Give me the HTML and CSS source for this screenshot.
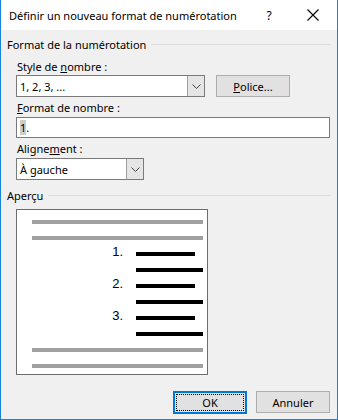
FILE: index.html
```html
<!DOCTYPE html>
<html lang="fr">
<head>
    <meta charset="UTF-8">
    <title>Définir un nouveau format de numérotation</title>
    <link rel="stylesheet" href="styles.css">
</head>
<body>
    <div class="window">
        <div class="titlebar">
            <span class="title">Définir un nouveau format de numérotation</span>
            <span class="help">?</span>
            <svg class="close" width="12" height="12" viewBox="0 0 12 12">
                <path d="M0.5 0.5 L11.5 11.5 M11.5 0.5 L0.5 11.5" stroke="#000" stroke-width="1.1" fill="none"/>
            </svg>
        </div>

        <div class="content">
            <div class="group-title"><span>Format de la numérotation</span></div>

            <div class="label">Style de <u>n</u>ombre :</div>
            <div class="row">
                <div class="combo combo-style">
                    <span class="combo-text">1, 2, 3, ...</span>
                    <span class="combo-btn">
                        <svg width="9" height="5" viewBox="0 0 9 5"><path d="M0.5 0.5 L4.5 4.5 L8.5 0.5" stroke="#444" stroke-width="1" fill="none"/></svg>
                    </span>
                </div>
                <div class="button police"><u>P</u>olice...</div>
            </div>

            <div class="label label-format"><u>F</u>ormat de nombre :</div>
            <div class="textbox"><span class="sel">1</span>.</div>

            <div class="label label-align">Aligne<u>m</u>ent :</div>
            <div class="combo combo-align">
                <span class="combo-text">À gauche</span>
                <span class="combo-btn">
                    <svg width="9" height="5" viewBox="0 0 9 5"><path d="M0.5 0.5 L4.5 4.5 L8.5 0.5" stroke="#444" stroke-width="1" fill="none"/></svg>
                </span>
            </div>

            <div class="group-title group-preview"><span>Aperçu</span></div>

            <div class="preview">
                <div class="line"><div class="bar grey"></div></div>
                <div class="line"><div class="bar grey"></div></div>
                <div class="line item"><span class="num">1.</span><div class="bar black short"></div></div>
                <div class="line item"><span class="num"></span><div class="bar black"></div></div>
                <div class="line item"><span class="num">2.</span><div class="bar black short"></div></div>
                <div class="line item"><span class="num"></span><div class="bar black"></div></div>
                <div class="line item"><span class="num">3.</span><div class="bar black short"></div></div>
                <div class="line item"><span class="num"></span><div class="bar black"></div></div>
                <div class="line"><div class="bar grey"></div></div>
                <div class="line"><div class="bar grey"></div></div>
            </div>

            <div class="footer">
                <div class="button ok"><span class="focus">OK</span></div>
                <div class="button">Annuler</div>
            </div>
        </div>
    </div>
</body>
</html>
```

FILE: styles.css
```css
body {
    margin: 0;
    font-family: "Noto Sans", sans-serif;
    font-size: 11px;
    color: #000;
}
.window {
    width: 336px;
    height: 419px;
    background: #f0f0f0;
    border: 1px solid #1883d7;
    border-top: none;
    display: flex;
    flex-direction: column;
}
.titlebar {
    height: 30px;
    background: #fff;
    display: flex;
    align-items: center;
    padding-left: 8px;
}
.title {
    flex: 1;
}
.help {
    width: 12px;
    text-align: center;
    margin-right: 32px;
    font-size: 12px;
}
.close {
    margin-right: 18px;
}
.content {
    padding: 6px 6px 0 6px;
    display: flex;
    flex-direction: column;
}
.group-title {
    display: flex;
    align-items: center;
    height: 16px;
}
.group-title::after {
    content: "";
    flex: 1;
    height: 1px;
    background: #dcdcdc;
    margin-left: 5px;
}
.label {
    margin: 7px 0 0 10px;
    height: 16px;
    line-height: 16px;
}
.row {
    display: flex;
    align-items: center;
    margin: 0 0 0 9px;
    gap: 11px;
}
.combo {
    height: 20px;
    background: #fff;
    border: 1px solid #7a7a7a;
    display: flex;
    align-items: center;
    margin-left: 9px;
}
.row .combo {
    margin-left: 0;
}
.combo-style {
    width: 187px;
}
.combo-align {
    width: 126px;
    margin-top: 1px;
}
.combo-text {
    flex: 1;
    padding-left: 3px;
}
.combo-btn {
    width: 16px;
    height: 20px;
    background: #e5e5e5;
    border-left: 1px solid #a0a0a0;
    display: flex;
    align-items: center;
    justify-content: center;
}
.button {
    width: 72px;
    height: 20px;
    background: #e1e1e1;
    border: 1px solid #adadad;
    display: flex;
    align-items: center;
    justify-content: center;
}
.label-format {
    margin-top: 3px;
}
.textbox {
    margin: 1px 0 0 9px;
    width: 309px;
    height: 19px;
    line-height: 19px;
    background: #fff;
    border: 1px solid #7a7a7a;
    padding-left: 3px;
}
.sel {
    background: #cccccc;
}
.label-align {
    margin-top: 3px;
}
.group-preview {
    margin-top: 7px;
}
.preview {
    margin: 6px 0 0 9px;
    width: 192px;
    background: #fff;
    border: 1px solid #6d6d6d;
    padding-top: 10px;
    box-sizing: border-box;
    height: 166px;
}
.line {
    height: 16px;
    display: flex;
    align-items: flex-start;
    padding-left: 15px;
}
.bar {
    height: 4px;
    width: 171px;
}
.grey {
    background: #a0a0a0;
}
.black {
    background: #000;
    width: 67px;
}
.black.short {
    width: 59px;
}
.item {
    padding-left: 0;
}
.num {
    width: 106px;
    text-align: right;
    padding-right: 13px;
    font-family: "Liberation Sans", Arial, sans-serif;
    font-size: 13px;
    line-height: 4px;
    margin-top: -2px;
}
.footer {
    display: flex;
    justify-content: flex-end;
    gap: 9px;
    margin-top: 16px;
    padding-right: 1px;
}
.ok {
    border: 2px solid #0078d7;
    width: 70px;
    height: 19px;
}
.focus {
    width: 66px;
    height: 15px;
    border: 1px dotted #000;
    display: flex;
    align-items: center;
    justify-content: center;
}
```
